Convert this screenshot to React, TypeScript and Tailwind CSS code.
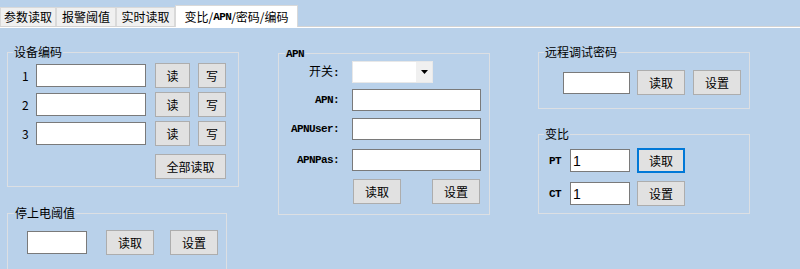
import React from "react";

const mono = "font-['Liberation_Mono',monospace] text-[11px] font-bold tracking-[-0.6px]";

function Btn({ label, className, focus }: { label: string; className: string; focus?: boolean }) {
  return (
    <button
      className={`h-[25px] shrink-0 flex items-center justify-center bg-[#e1e1e1] text-[12px] leading-[14px] text-black ${
        focus ? "border-2 border-[#0078d7]" : "border border-[#adadad]"
      } ${className}`}
    >
      {label}
    </button>
  );
}

function Field({ className, value }: { className: string; value?: string }) {
  return (
    <input
      defaultValue={value}
      className={`shrink-0 bg-white border border-[#7a7a7a] outline-none px-[2px] text-[14px] font-['Liberation_Sans',sans-serif] ${className}`}
    />
  );
}

function Group({ title, className, legendClass, children }: { title: React.ReactNode; className: string; legendClass: string; children: React.ReactNode }) {
  return (
    <fieldset className={`border border-[#dcdfe3] ${className}`}>
      <legend className={`px-[1px] text-[12px] leading-[14px] ${legendClass}`}>{title}</legend>
      {children}
    </fieldset>
  );
}

function Combo() {
  return (
    <div className="ml-[13px] w-[81px] h-[22px] bg-white border border-[#e8e8e8] flex justify-end">
      <div className="w-[16px] h-full bg-[#f0f0f0] flex items-center justify-center">
        <svg width="7" height="4" viewBox="0 0 7 4">
          <path d="M0 0h7L3.5 4z" fill="#000" />
        </svg>
      </div>
    </div>
  );
}

export default function App() {
  const tabs = [
    { label: "参数读取", w: "w-[56px]" },
    { label: "报警阈值", w: "w-[60px]" },
    { label: "实时读取", w: "w-[59px]" },
  ];

  return (
    <div className="w-[800px] h-[269px] overflow-hidden bg-[#b9d1ea] text-black text-[12px] font-['Noto_Sans_CJK_SC',sans-serif]">
      {/* tab strip */}
      <div className="h-[27px] flex items-end border-b border-[#d4d4d4]">
        {tabs.map((t) => (
          <div
            key={t.label}
            className={`${t.w} h-[19px] bg-[#f0f0f0] border border-b-0 border-[#d9d9d9] flex items-center justify-center leading-[14px]`}
          >
            {t.label}
          </div>
        ))}
        <div className="w-[123px] h-[22px] relative top-[1px] bg-white border border-b-0 border-[#d9d9d9] flex items-center justify-center leading-[14px]">
          变比/<span className={mono}>APN</span>/密码/编码
        </div>
      </div>
      <div className="h-px bg-white" />

      <div className="flex pl-[7px] pt-[17px]">
        {/* column 1 */}
        <div className="w-[232px] flex flex-col shrink-0">
          <Group title="设备编码" className="w-[232px] pb-[7px]" legendClass="ml-[5px]">
            {["1", "2", "3"].map((n) => (
              <div key={n} className="flex items-center h-[25px] mt-[4px]">
                <span className="w-[28px] pl-[14px] leading-[14px]">{n}</span>
                <Field className="w-[110px] h-[23px]" />
                <Btn label="读" className="ml-[9px] w-[35px]" />
                <Btn label="写" className="ml-[8px] w-[28px]" />
              </div>
            ))}
            <Btn label="全部读取" className="mt-[8px] ml-[147px] w-[71px]" />
          </Group>

          <Group title="停上电阈值" className="w-[220px] mt-[19px] pb-[30px]" legendClass="ml-[6px]">
            <div className="flex items-center h-[25px] mt-[10px]">
              <Field className="ml-[19px] w-[60px] h-[23px]" />
              <Btn label="读取" className="ml-[19px] w-[48px]" />
              <Btn label="设置" className="ml-[16px] w-[48px]" />
            </div>
          </Group>
        </div>

        {/* column 2 */}
        <div className="ml-[39px] w-[212px] shrink-0">
          <Group title={<span className={mono}>APN</span>} className="w-[212px] pb-[10px]" legendClass="ml-[6px]">
            <div className="flex items-center">
              <span className="w-[60px] text-right leading-[14px]">
                开关<span className={mono}>:</span>
              </span>
              <Combo />
            </div>
            {[
              { l: "APN:", mt: "mt-[6px]" },
              { l: "APNUser:", mt: "mt-[7px]" },
              { l: "APNPas:", mt: "mt-[9px]" },
            ].map((r) => (
              <div key={r.l} className={`flex items-center ${r.mt}`}>
                <span className={`w-[60px] text-right leading-[14px] ${mono}`}>{r.l}</span>
                <Field className="ml-[13px] w-[129px] h-[22px]" />
              </div>
            ))}
            <div className="flex mt-[8px]">
              <Btn label="读取" className="ml-[74px] w-[48px]" />
              <Btn label="设置" className="ml-[31px] w-[48px]" />
            </div>
          </Group>
        </div>

        {/* column 3 */}
        <div className="ml-[48px] w-[212px] flex flex-col shrink-0">
          <Group title="远程调试密码" className="w-[212px] pb-[13px]" legendClass="ml-[5px]">
            <div className="flex items-center h-[25px] mt-[11px]">
              <Field className="ml-[24px] w-[67px] h-[22px]" />
              <Btn label="读取" className="ml-[7px] w-[48px]" />
              <Btn label="设置" className="ml-[8px] w-[48px]" />
            </div>
          </Group>

          <Group title="变比" className="w-[212px] mt-[18px] pb-[7px]" legendClass="ml-[5px]">
            <div className="flex items-center h-[25px] mt-[7px]">
              <span className={`w-[31px] pl-[10px] leading-[14px] ${mono}`}>PT</span>
              <Field className="w-[60px] h-[23px]" value="1" />
              <Btn label="读取" className="ml-[7px] w-[48px]" focus />
            </div>
            <div className="flex items-center h-[25px] mt-[8px]">
              <span className={`w-[31px] pl-[10px] leading-[14px] ${mono}`}>CT</span>
              <Field className="w-[60px] h-[23px]" value="1" />
              <Btn label="设置" className="ml-[7px] w-[48px]" />
            </div>
          </Group>
        </div>
      </div>
    </div>
  );
}
